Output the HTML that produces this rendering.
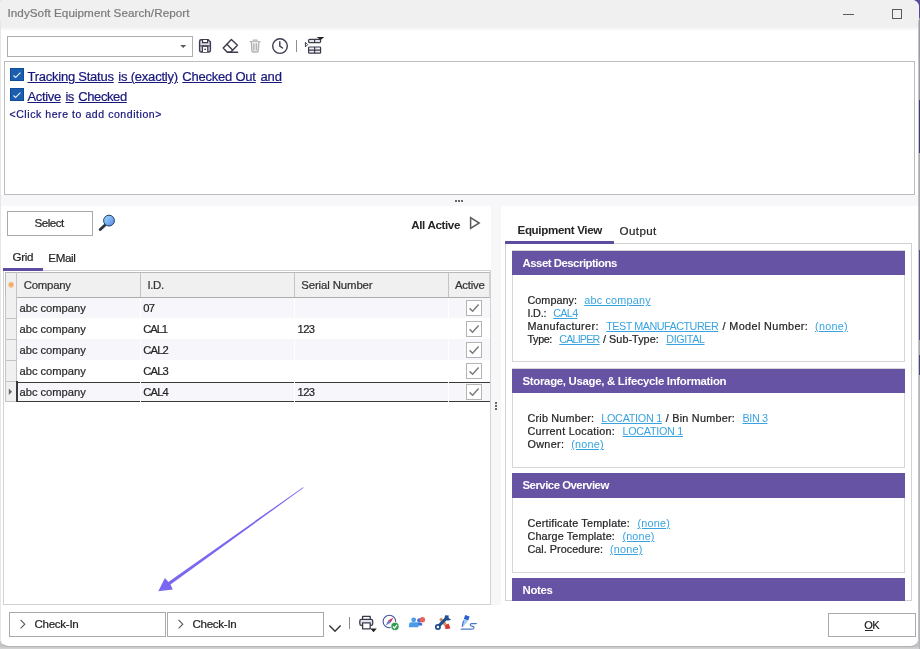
<!DOCTYPE html>
<html><head><meta charset="utf-8">
<title>IndySoft Equipment Search/Report</title>
<style>
*{box-sizing:border-box;margin:0;padding:0}
html,body{width:920px;height:649px;overflow:hidden}
body{font-family:"Liberation Sans",sans-serif;font-size:12px;color:#252525;position:relative;background:linear-gradient(#cfcfcf 0,#c2c2c2 646px,#d6d6d6 649px)}
.a{position:absolute}
.t{position:absolute;white-space:nowrap;-webkit-text-stroke:.22px}
#win{left:0;top:0;width:919px;height:646px;background:#fff;border-radius:5px 7px 8px 8px;overflow:hidden}
#titlebar{left:0;top:0;width:919px;height:31px;background:linear-gradient(#f0f0f0 0,#f0f0f0 27px,#fff 31px)}
#cond{left:4px;top:61px;width:911px;height:134px;border:1px solid #bcbcbc;background:#fff}
.cb{position:absolute;width:13.5px;height:13.5px;background:#1b5eb0;border:1px solid #0f4c98}
.btn{position:absolute;border:1px solid #a9a9a9;background:#fff}
.card{position:absolute;left:512px;width:393px;border:1px solid #d6d6d6;background:#fff}
.ch{position:absolute;left:512px;width:393px;height:25px;background:#6753a4}
.gk{position:absolute;left:466px;width:16px;height:16px;border:1px solid #b4b4b4;background:#fff}
</style></head><body>
<div class="a" style="left:905px;top:0;width:15px;height:19px;background:#5b4a9b"></div>
<div class="a" style="left:0;top:0;width:12px;height:12px;background:#e4e4e4"></div>
<div id="win" class="a">
<div id="titlebar" class="a"></div>
<!-- window controls -->
<div class="a" style="left:843px;top:14px;width:11px;height:1px;background:#5a5a5a"></div>
<div class="a" style="left:892px;top:9px;width:10px;height:10px;border:1px solid #5a5a5a"></div>

<!-- toolbar -->
<div class="a" style="left:7px;top:36px;width:186px;height:21px;border:1px solid #aeaeae;background:#fff"></div>
<svg class="a" style="left:180px;top:45px" width="7" height="4" viewBox="0 0 7 4"><path d="M0.2 0.1H6.2L3.2 2.9Z" fill="#5a5a5a"/></svg>
<!--ICONS_BEGIN--><svg class="a" style="left:0;top:0;pointer-events:none" width="918" height="645" viewBox="0 0 918 645" fill="none">
<!-- save -->
<g stroke="#3b3b4c" stroke-width="1.4">
<path d="M201.2 39.8H208.2L210.4 42V50.6Q210.4 52 209 52H201Q199.6 52 199.6 50.6V41.4Q199.6 39.8 201.2 39.8Z" fill="#dcdce8"/>
<path d="M202.5 40V42.6H207.6V40" fill="#fff" stroke-width="1.2"/>
<path d="M202.4 52V46.2H207.8V52" fill="#fff" stroke-width="1.3"/><path d="M200 45.9H210" stroke-width="1"/>
</g>
<rect x="204.4" y="48.7" width="1.6" height="1.3" fill="#3b3b4c"/>
<!-- eraser -->
<g stroke="#3b3b4c" stroke-width="1.4" stroke-linejoin="round" stroke-linecap="round">
<path d="M231.4 39.6L237.4 45.3L230.6 52.2H227.3L223.2 48.1Z"/>
<path d="M226.9 44.3L232.6 50"/>
<path d="M228 52.3H237.6"/>
</g>
<!-- trash (disabled) -->
<g stroke="#b2b2b2" stroke-width="1.3" stroke-linecap="round">
<path d="M250.2 41.6H260"/>
<path d="M253.4 41.4V40.1H256.8V41.4"/>
<path d="M251.3 41.8L251.9 51Q252 52 253 52H257.2Q258.2 52 258.3 51L258.9 41.8" fill="#ececec"/>
<path d="M253.8 44V49.8M256.4 44V49.8"/>
</g>
<!-- clock -->
<circle cx="280" cy="46.1" r="7.3" stroke="#3b3b4c" stroke-width="1.4"/>
<path d="M279.8 41.8V46.2L282.6 48" stroke="#3b3b4c" stroke-width="1.4" stroke-linecap="round" stroke-linejoin="round"/>
<!-- sep -->
<rect x="296" y="40" width="1" height="12" fill="#8e8e8e"/>
<!-- table icon -->
<g stroke="#3b3b4c" stroke-width="1.2">
<rect x="308.6" y="39.4" width="12" height="3.2" rx="1" fill="#e6e6ee"/>
<path d="M314.6 39.4V42.6"/>
<rect x="308.6" y="47" width="12" height="6.2" rx="0.8" fill="#eeeef4"/>
<path d="M314.6 47V53.2M308.6 50.1H320.6"/>
<path d="M305.4 42.3L307.7 44.6L305.4 46.9Z" stroke-width="1"/>
</g>
<path d="M316.6 37.1H324.2L320.8 39.9Z" fill="#222"/>
<!-- magnifier -->
<defs><linearGradient id="lg" x1="0" y1="0" x2="1" y2="1"><stop offset="0" stop-color="#9bdcfb"/><stop offset="1" stop-color="#5a86e8"/></linearGradient></defs>
<path d="M104.6 225.4L100.2 229.6" stroke="#2a333e" stroke-width="2.8" stroke-linecap="round"/>
<circle cx="109" cy="220.6" r="5.4" fill="url(#lg)" stroke="#1f3d66" stroke-width="1"/>
<!-- printer -->
<g stroke="#3b3b4c" stroke-width="1.3" stroke-linejoin="round">
<path d="M362.6 619.4V616.3H370.2V619.4" />
<rect x="359.8" y="619.4" width="12.9" height="6" rx="1.6" fill="#e4e4ec"/>
<rect x="362.6" y="622.8" width="7.6" height="6" fill="#fff"/>
</g>
<path d="M370.3 628.6H376.8L373.55 632.2Z" fill="#222"/>
<!-- compass -->
<circle cx="389.4" cy="621.5" r="6.3" stroke="#46529e" stroke-width="1.1" fill="#fff"/>
<path d="M393.4 617.6L390.6 622.7L388.2 620.4Z" fill="#cf2f5e"/>
<path d="M385.6 625.4L390.6 622.7L388.2 620.4Z" fill="#5f7fd0"/>
<circle cx="395" cy="626.4" r="4.1" fill="#2f9c4c" stroke="#fff" stroke-width="0.8"/>
<path d="M393 626.5L394.5 628L397.1 624.9" stroke="#fff" stroke-width="1.2"/>
<!-- people -->
<circle cx="419.2" cy="620.3" r="2.1" fill="#3e6fd0"/>
<path d="M415.5 626V624.2Q415.5 622.4 417.4 622.4H420.4Q422.2 622.4 422.2 624.2V625.4H415.5Z" fill="#3e6fd0"/>
<circle cx="413.7" cy="619.8" r="2.4" fill="#4b9ce8"/>
<path d="M409 627.2V624.6Q409 622.3 411.3 622.3H416.1Q418.4 622.3 418.4 624.6V627.2Z" fill="#4b9ce8"/>
<circle cx="422.4" cy="619.8" r="2.7" fill="#e8625f"/>
<!-- tools -->
<path d="M441 619.4L447.6 627.2" stroke="#cf9168" stroke-width="3.1" stroke-linecap="round"/>
<path d="M445.4 625.2L448.6 623.6L450.4 628.6L445.2 629Z" fill="#d93434"/>
<path d="M438.4 626.4L447 617.6" stroke="#1f4f8c" stroke-width="3" stroke-linecap="round"/>
<circle cx="437.9" cy="627" r="2.1" stroke="#1f4f8c" stroke-width="1.8" fill="#fff"/>
<path d="M445.2 615.2Q443.8 618.2 446 620Q448.4 621.4 451 619.6L448.2 617.8L448.8 615.6Z" fill="#1f4f8c"/>
<!-- pen / sign -->
<path d="M465.2 615L469.6 616.4L468.2 620.4L463.8 619Z" fill="#2b5fd2"/>
<path d="M463.8 619L468.2 620.4L463.2 626.4L462.2 627Z" fill="#9cc8f4"/>
<path d="M463.4 620.6L462.2 626.8" stroke="#2b5fd2" stroke-width="1"/>
<path d="M476.4 623.6H471.6Q470 623.8 470.4 625.2Q471 626.2 472.6 626.4Q474.4 626.8 473.8 628.2Q473.2 629.2 471.4 629.2H461.2" stroke="#4a78c8" stroke-width="1.2" stroke-linecap="round"/>
</svg>
<!--ICONS_END-->

<!-- condition box -->
<div id="cond" class="a"></div>
<div class="cb" style="left:10.25px;top:67.75px"></div>
<div class="cb" style="left:10.25px;top:87.75px"></div>
<svg class="a" style="left:10px;top:68px" width="14" height="14" viewBox="0 0 14 14"><path d="M3.5 7.5L5.6 9.4L10.4 4.7" fill="none" stroke="#e6effb" stroke-width="1.1"/></svg>
<svg class="a" style="left:10px;top:88px" width="14" height="14" viewBox="0 0 14 14"><path d="M3.5 7.5L5.6 9.4L10.4 4.7" fill="none" stroke="#e6effb" stroke-width="1.1"/></svg>

<!-- splitter strip -->
<div class="a" style="left:0;top:195px;width:918px;height:11px;background:#f7f7f9"></div>
<div class="a" style="left:455px;top:200px;width:2px;height:2px;background:#666"></div>
<div class="a" style="left:458px;top:200px;width:2px;height:2px;background:#666"></div>
<div class="a" style="left:461px;top:200px;width:2px;height:2px;background:#666"></div>
<div class="a" style="left:491px;top:206px;width:10px;height:399px;background:#f7f7f9"></div>
<div class="a" style="left:495px;top:402px;width:2px;height:2px;background:#666"></div>
<div class="a" style="left:495px;top:405px;width:2px;height:2px;background:#666"></div>
<div class="a" style="left:495px;top:408px;width:2px;height:2px;background:#666"></div>

<!-- left panel -->
<div class="btn" style="left:7px;top:211px;width:86px;height:25px"></div>
<!--ICON_MAG-->
<svg class="a" style="left:469px;top:216px" width="12" height="14" viewBox="0 0 12 14"><path d="M1.6 1.6L10.2 7L1.6 12.4Z" fill="none" stroke="#5c5c5c" stroke-width="1.5" stroke-linejoin="miter"/></svg>
<!-- tabs -->
<div class="a" style="left:3px;top:270px;width:488px;height:1px;background:#d2d2d2"></div>
<div class="a" style="left:3px;top:268px;width:40px;height:3px;background:#5f4b9f"></div>
<!-- grid frame -->
<div class="a" style="left:3px;top:271px;width:488px;height:334px;border:1px solid #d2d2d2;border-top:none;background:#fff"></div>
<!-- header -->
<div class="a" style="left:5px;top:272px;width:485px;height:26px;background:#f0f0f0;border:1px solid #b9b9b9;border-bottom-color:#adadad;border-right-color:#d0d0d0"></div>
<div class="a" style="left:16px;top:272px;width:1px;height:130px;background:#c4c4c4"></div>
<div class="a" style="left:140px;top:273px;width:1px;height:24px;background:#c4c4c4"></div>
<div class="a" style="left:294px;top:273px;width:1px;height:24px;background:#c4c4c4"></div>
<div class="a" style="left:448px;top:273px;width:1px;height:24px;background:#c4c4c4"></div>
<!-- rows -->
<div class="a" style="left:17px;top:297.5px;width:473px;height:20.8px;background:#f7f7fb"></div>
<div class="a" style="left:17px;top:339.3px;width:473px;height:21.2px;background:#f7f7fb"></div>
<div class="a" style="left:17px;top:382px;width:473px;height:19.5px;background:#f7f7fb"></div>
<!-- indicator column -->
<div class="a" style="left:5px;top:297px;width:12px;height:105px;background:#f0f0f0;border-left:1px solid #c4c4c4;border-right:1px solid #c4c4c4"></div>
<div class="a" style="left:5px;top:318px;width:12px;height:1px;background:#c4c4c4"></div>
<div class="a" style="left:5px;top:339px;width:12px;height:1px;background:#c4c4c4"></div>
<div class="a" style="left:5px;top:360px;width:12px;height:1px;background:#c4c4c4"></div>
<div class="a" style="left:5px;top:381px;width:12px;height:1px;background:#c4c4c4"></div>
<div class="a" style="left:5px;top:401px;width:12px;height:1px;background:#c4c4c4"></div>
<svg class="a" style="left:8px;top:388px" width="5" height="8" viewBox="0 0 5 8"><path d="M0.8 0.6L4 3.8L0.8 7Z" fill="#666"/></svg>
<!-- focused row border -->
<div class="a" style="left:16px;top:381.6px;width:473.5px;height:1.4px;background:#3a3a3a"></div>
<div class="a" style="left:16px;top:400.8px;width:473.5px;height:1.4px;background:#3a3a3a"></div>
<div class="a" style="left:16px;top:381px;width:1.5px;height:21px;background:#3a3a3a"></div>
<!-- faint column separators -->
<div class="a" style="left:140px;top:298px;width:1px;height:104.5px;background:rgba(255,255,255,.9)"></div>
<div class="a" style="left:294px;top:298px;width:1px;height:104.5px;background:rgba(255,255,255,.9)"></div>
<div class="a" style="left:448px;top:298px;width:1px;height:104.5px;background:rgba(255,255,255,.9)"></div>
<!-- orange star -->
<svg class="a" style="left:8px;top:281px" width="7" height="8" viewBox="0 0 7 8"><g stroke="#f3a65c" stroke-width="1.1" stroke-linecap="round"><path d="M3.1 1V6.6M0.6 3.8H5.6M1.2 1.9L5 5.7M5 1.9L1.2 5.7"/></g></svg>
<!-- grid checkboxes -->
<div class="gk" style="top:300px"></div><svg class="a" style="left:466px;top:300px" width="16" height="16" viewBox="0 0 16 16"><path d="M3.6 8.4L6.6 11.2L12.6 4.6" fill="none" stroke="#7c7c7c" stroke-width="1.5"/></svg>
<div class="gk" style="top:321.2px"></div><svg class="a" style="left:466px;top:321.2px" width="16" height="16" viewBox="0 0 16 16"><path d="M3.6 8.4L6.6 11.2L12.6 4.6" fill="none" stroke="#7c7c7c" stroke-width="1.5"/></svg>
<div class="gk" style="top:342.3px"></div><svg class="a" style="left:466px;top:342.3px" width="16" height="16" viewBox="0 0 16 16"><path d="M3.6 8.4L6.6 11.2L12.6 4.6" fill="none" stroke="#7c7c7c" stroke-width="1.5"/></svg>
<div class="gk" style="top:363.3px"></div><svg class="a" style="left:466px;top:363.3px" width="16" height="16" viewBox="0 0 16 16"><path d="M3.6 8.4L6.6 11.2L12.6 4.6" fill="none" stroke="#7c7c7c" stroke-width="1.5"/></svg>
<div class="gk" style="top:384.3px"></div><svg class="a" style="left:466px;top:384.3px" width="16" height="16" viewBox="0 0 16 16"><path d="M3.6 8.4L6.6 11.2L12.6 4.6" fill="none" stroke="#7c7c7c" stroke-width="1.5"/></svg>


<!-- arrow -->
<svg class="a" style="left:140px;top:470px;filter:blur(.35px)" width="180" height="130" viewBox="140 470 180 130"><path d="M303.6 487.8L170.5 584.4L172.8 589.4L158.3 591.2L164.9 578.1L168.4 582L303 487.2Z" fill="#7a68f0"/></svg>

<!-- bottom bar -->
<div class="btn" style="left:9px;top:612px;width:157px;height:25px"></div>
<div class="btn" style="left:167px;top:612px;width:157px;height:25px"></div>
<svg class="a" style="left:19px;top:619px" width="8" height="11" viewBox="0 0 8 11"><path d="M1.6 1L5.8 5.2L1.6 9.4" fill="none" stroke="#5a5a5a" stroke-width="1.1"/></svg>
<svg class="a" style="left:177px;top:619px" width="8" height="11" viewBox="0 0 8 11"><path d="M1.6 1L5.8 5.2L1.6 9.4" fill="none" stroke="#5a5a5a" stroke-width="1.1"/></svg>
<svg class="a" style="left:328px;top:624px" width="14" height="9" viewBox="0 0 14 9"><path d="M1.4 1.6L7 7.2L12.6 1.6" fill="none" stroke="#333" stroke-width="1.4"/></svg>
<div class="a" style="left:349px;top:617px;width:1px;height:12px;background:#8a8a8a"></div>
<!--ICONS_BOTTOM-->
<div class="btn" style="left:828px;top:613px;width:88px;height:24px"></div>
<div class="a" style="left:864.5px;top:630px;width:8.5px;height:1px;background:#252525"></div>

<!-- right panel -->
<div class="a" style="left:505px;top:243px;width:407px;height:358px;border:1px solid #d2d2d2;background:#fff;overflow:hidden"></div>
<div class="a" style="left:505px;top:240.6px;width:109px;height:3.4px;background:#5f4b9f"></div>
<div class="card" style="top:250px;height:112px"></div><div class="ch" style="top:250.5px;height:24.5px"></div>
<div class="card" style="top:368px;height:99.5px"></div><div class="ch" style="top:368.7px;height:24.5px"></div>
<div class="card" style="top:473px;height:99.5px"></div><div class="ch" style="top:473.2px;height:24.8px"></div>
<div class="ch" style="top:578px;height:22.5px"></div>

<div class="a" id="tx" style="left:0;top:0;width:919px;height:645px;will-change:transform">
<div class="t" style="left:7.50px;top:5.45px;font-size:11.7px;line-height:15px;color:#7a7a7a;letter-spacing:0.043px">IndySoft Equipment Search/Report</div>
<div class="t" style="left:27.50px;top:68.00px;font-size:13px;line-height:17px;color:#17177c;text-decoration:underline;letter-spacing:-0.240px">Tracking Status</div>
<div class="t" style="left:118.25px;top:68.00px;font-size:13px;line-height:17px;color:#17177c;text-decoration:underline;letter-spacing:-0.198px">is (exactly)</div>
<div class="t" style="left:182.25px;top:68.00px;font-size:13px;line-height:17px;color:#17177c;text-decoration:underline;letter-spacing:-0.216px">Checked Out</div>
<div class="t" style="left:260.50px;top:68.00px;font-size:13px;line-height:17px;color:#17177c;text-decoration:underline;letter-spacing:-0.151px">and</div>
<div class="t" style="left:27.50px;top:88.00px;font-size:13px;line-height:17px;color:#17177c;text-decoration:underline;letter-spacing:-0.359px">Active</div>
<div class="t" style="left:65.50px;top:88.00px;font-size:13px;line-height:17px;color:#17177c;text-decoration:underline;letter-spacing:-0.570px">is</div>
<div class="t" style="left:78.25px;top:88.00px;font-size:13px;line-height:17px;color:#17177c;text-decoration:underline;letter-spacing:-0.402px">Checked</div>
<div class="t" style="left:9.50px;top:107.36px;font-size:10.5px;line-height:14px;color:#17177c;letter-spacing:0.568px">&lt;Click here to add condition&gt;</div>
<div class="t" style="left:34.50px;top:215.48px;font-size:11.6px;line-height:15px;color:#252525;letter-spacing:-0.497px">Select</div>
<div class="t" style="left:411.25px;top:217.48px;font-size:11.6px;line-height:15px;color:#252525;font-weight:700;-webkit-text-stroke:0;letter-spacing:-0.366px">All Active</div>
<div class="t" style="left:12.50px;top:249.48px;font-size:11.6px;line-height:15px;color:#252525;letter-spacing:-0.289px">Grid</div>
<div class="t" style="left:48.25px;top:250.48px;font-size:11.6px;line-height:15px;color:#252525;letter-spacing:-0.350px">EMail</div>
<div class="t" style="left:23.75px;top:277.55px;font-size:11.4px;line-height:15px;color:#333;letter-spacing:-0.250px">Company</div>
<div class="t" style="left:147.50px;top:277.55px;font-size:11.4px;line-height:15px;color:#333;letter-spacing:-0.371px">I.D.</div>
<div class="t" style="left:301.25px;top:277.55px;font-size:11.4px;line-height:15px;color:#333;letter-spacing:-0.120px">Serial Number</div>
<div class="t" style="left:455.00px;top:277.55px;font-size:11.4px;line-height:15px;color:#333;letter-spacing:-0.255px">Active</div>
<div class="t" style="left:19.50px;top:300.62px;font-size:11.2px;line-height:15px;color:#2a2a2a;letter-spacing:-0.027px">abc company</div>
<div class="t" style="left:143.25px;top:300.62px;font-size:11.2px;line-height:15px;color:#252525;letter-spacing:-0.727px">07</div>
<div class="t" style="left:19.50px;top:321.62px;font-size:11.2px;line-height:15px;color:#2a2a2a;letter-spacing:-0.027px">abc company</div>
<div class="t" style="left:143.25px;top:321.62px;font-size:11.2px;line-height:15px;color:#252525;letter-spacing:-1.062px">CAL1</div>
<div class="t" style="left:19.50px;top:342.62px;font-size:11.2px;line-height:15px;color:#2a2a2a;letter-spacing:-0.027px">abc company</div>
<div class="t" style="left:143.25px;top:342.62px;font-size:11.2px;line-height:15px;color:#252525;letter-spacing:-0.812px">CAL2</div>
<div class="t" style="left:19.50px;top:363.62px;font-size:11.2px;line-height:15px;color:#2a2a2a;letter-spacing:-0.027px">abc company</div>
<div class="t" style="left:143.25px;top:363.62px;font-size:11.2px;line-height:15px;color:#252525;letter-spacing:-0.812px">CAL3</div>
<div class="t" style="left:19.50px;top:384.62px;font-size:11.2px;line-height:15px;color:#2a2a2a;letter-spacing:-0.027px">abc company</div>
<div class="t" style="left:143.25px;top:384.62px;font-size:11.2px;line-height:15px;color:#252525;letter-spacing:-0.812px">CAL4</div>
<div class="t" style="left:297.50px;top:321.62px;font-size:11.2px;line-height:15px;color:#252525;letter-spacing:-0.557px">123</div>
<div class="t" style="left:297.50px;top:384.62px;font-size:11.2px;line-height:15px;color:#252525;letter-spacing:-0.557px">123</div>
<div class="t" style="left:34.50px;top:616.48px;font-size:11.6px;line-height:15px;color:#252525;letter-spacing:-0.301px">Check-In</div>
<div class="t" style="left:192.50px;top:616.48px;font-size:11.6px;line-height:15px;color:#252525;letter-spacing:-0.301px">Check-In</div>
<div class="t" style="left:864.30px;top:618.19px;font-size:11px;line-height:14px;color:#252525;letter-spacing:-0.503px">OK</div>
<div class="t" style="left:517.50px;top:222.48px;font-size:11.6px;line-height:15px;color:#252525;font-weight:700;-webkit-text-stroke:0;letter-spacing:-0.346px">Equipment View</div>
<div class="t" style="left:619.50px;top:223.48px;font-size:11.6px;line-height:15px;color:#252525;letter-spacing:0.406px">Output</div>
<div class="t" style="left:522.50px;top:255.55px;font-size:11.4px;line-height:15px;color:#fff;font-weight:700;-webkit-text-stroke:0;letter-spacing:-0.497px">Asset Descriptions</div>
<div class="t" style="left:522.50px;top:373.55px;font-size:11.4px;line-height:15px;color:#fff;font-weight:700;-webkit-text-stroke:0;letter-spacing:-0.294px">Storage, Usage, &amp; Lifecycle Information</div>
<div class="t" style="left:522.50px;top:477.55px;font-size:11.4px;line-height:15px;color:#fff;font-weight:700;-webkit-text-stroke:0;letter-spacing:-0.507px">Service Overview</div>
<div class="t" style="left:522.50px;top:582.55px;font-size:11.4px;line-height:15px;color:#fff;font-weight:700;-webkit-text-stroke:0;letter-spacing:-0.331px">Notes</div>
<div class="t" style="left:527.50px;top:293.26px;font-size:10.8px;line-height:14px;color:#252525;letter-spacing:0.035px">Company:</div>
<div class="t" style="left:584.25px;top:293.26px;font-size:10.8px;line-height:14px;color:#38a3e0;-webkit-text-stroke:0;text-decoration:underline;letter-spacing:0.207px">abc company</div>
<div class="t" style="left:527.50px;top:306.26px;font-size:10.8px;line-height:14px;color:#252525;letter-spacing:-0.209px">I.D.:</div>
<div class="t" style="left:553.25px;top:306.26px;font-size:10.8px;line-height:14px;color:#38a3e0;-webkit-text-stroke:0;text-decoration:underline;letter-spacing:-0.691px">CAL4</div>
<div class="t" style="left:527.50px;top:319.26px;font-size:10.8px;line-height:14px;color:#252525;letter-spacing:0.356px">Manufacturer:</div>
<div class="t" style="left:606.25px;top:319.26px;font-size:10.8px;line-height:14px;color:#38a3e0;-webkit-text-stroke:0;text-decoration:underline;letter-spacing:-0.493px">TEST MANUFACTURER</div>
<div class="t" style="left:722.50px;top:319.26px;font-size:10.8px;line-height:14px;color:#252525;letter-spacing:0.396px">/ Model Number:</div>
<div class="t" style="left:815.00px;top:319.26px;font-size:10.8px;line-height:14px;color:#38a3e0;-webkit-text-stroke:0;text-decoration:underline;letter-spacing:0.297px">(none)</div>
<div class="t" style="left:527.50px;top:332.26px;font-size:10.8px;line-height:14px;color:#252525;letter-spacing:-0.384px">Type:</div>
<div class="t" style="left:559.25px;top:332.26px;font-size:10.8px;line-height:14px;color:#38a3e0;-webkit-text-stroke:0;text-decoration:underline;letter-spacing:-0.850px">CALIPER</div>
<div class="t" style="left:603.00px;top:332.26px;font-size:10.8px;line-height:14px;color:#252525;letter-spacing:0.048px">/ Sub-Type:</div>
<div class="t" style="left:666.25px;top:332.26px;font-size:10.8px;line-height:14px;color:#38a3e0;-webkit-text-stroke:0;text-decoration:underline;letter-spacing:-0.422px">DIGITAL</div>
<div class="t" style="left:527.50px;top:411.26px;font-size:10.8px;line-height:14px;color:#252525;letter-spacing:0.212px">Crib Number:</div>
<div class="t" style="left:601.25px;top:411.26px;font-size:10.8px;line-height:14px;color:#38a3e0;-webkit-text-stroke:0;text-decoration:underline;letter-spacing:-0.266px">LOCATION 1</div>
<div class="t" style="left:665.75px;top:411.26px;font-size:10.8px;line-height:14px;color:#252525;letter-spacing:0.249px">/ Bin Number:</div>
<div class="t" style="left:742.50px;top:411.26px;font-size:10.8px;line-height:14px;color:#38a3e0;-webkit-text-stroke:0;text-decoration:underline;letter-spacing:-0.403px">BIN 3</div>
<div class="t" style="left:527.50px;top:424.26px;font-size:10.8px;line-height:14px;color:#252525;letter-spacing:0.275px">Current Location:</div>
<div class="t" style="left:622.50px;top:424.26px;font-size:10.8px;line-height:14px;color:#38a3e0;-webkit-text-stroke:0;text-decoration:underline;letter-spacing:-0.291px">LOCATION 1</div>
<div class="t" style="left:527.50px;top:437.26px;font-size:10.8px;line-height:14px;color:#252525;letter-spacing:0.323px">Owner:</div>
<div class="t" style="left:571.25px;top:437.26px;font-size:10.8px;line-height:14px;color:#38a3e0;-webkit-text-stroke:0;text-decoration:underline;letter-spacing:0.214px">(none)</div>
<div class="t" style="left:527.50px;top:516.26px;font-size:10.8px;line-height:14px;color:#252525;letter-spacing:0.204px">Certificate Template:</div>
<div class="t" style="left:637.50px;top:516.26px;font-size:10.8px;line-height:14px;color:#38a3e0;-webkit-text-stroke:0;text-decoration:underline;letter-spacing:0.214px">(none)</div>
<div class="t" style="left:527.50px;top:529.26px;font-size:10.8px;line-height:14px;color:#252525;letter-spacing:0.154px">Charge Template:</div>
<div class="t" style="left:622.50px;top:529.26px;font-size:10.8px;line-height:14px;color:#38a3e0;-webkit-text-stroke:0;text-decoration:underline;letter-spacing:0.130px">(none)</div>
<div class="t" style="left:527.50px;top:542.26px;font-size:10.8px;line-height:14px;color:#252525;letter-spacing:0.032px">Cal. Procedure:</div>
<div class="t" style="left:610.00px;top:542.26px;font-size:10.8px;line-height:14px;color:#38a3e0;-webkit-text-stroke:0;text-decoration:underline;letter-spacing:0.214px">(none)</div>
</div>
</div>
<div class="a" style="left:0;top:20px;width:919px;height:627px;border:1px solid #b4b4b4;border-top:none;border-left-color:#e6e6e6;border-right-color:#c4c4c4;border-radius:0 0 8px 8px"></div>
<!-- right edge strip (window behind) -->
<div class="a" style="left:919px;top:0;width:1px;height:649px;background:linear-gradient(#5b4a9b 0,#5b4a9b 18px,#9a9aa4 18px,#9a9aa4 100px,#403c7c 100px,#403c7c 153px,#aaaab0 153px,#aaaab0 250px,#554c8e 250px,#554c8e 340px,#a8a8ae 340px,#a8a8ae 355px,#4a4684 355px,#4a4684 375px,#b4b4b8 375px)"></div>
</body></html>
